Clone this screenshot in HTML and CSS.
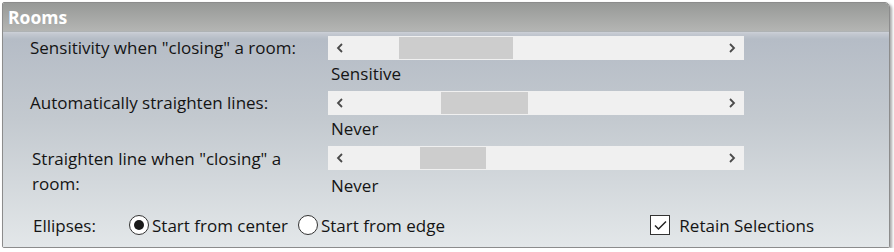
FILE: index.html
```html
<!DOCTYPE html>
<html>
<head>
<meta charset="utf-8">
<link rel="stylesheet" href="styles.css">
</head>
<body>
<div class="panel">
  <div class="header">Rooms</div>
  <div class="content">
    <div class="grid">
      <div class="label">Sensitivity when "closing" a room:</div>
      <div class="ctl">
        <div class="scroll">
          <span class="arrow"><svg width="8" height="10" viewBox="0 0 8 10"><polyline points="6,1 2,5 6,9" fill="none" stroke="#4a4a4a" stroke-width="1.8"/></svg></span>
          <div class="track"><div class="thumb" style="margin-left:47px;width:114px"></div></div>
          <span class="arrow"><svg width="8" height="10" viewBox="0 0 8 10"><polyline points="2,1 6,5 2,9" fill="none" stroke="#4a4a4a" stroke-width="1.8"/></svg></span>
        </div>
        <div class="value">Sensitive</div>
      </div>

      <div class="label">Automatically straighten lines:</div>
      <div class="ctl">
        <div class="scroll">
          <span class="arrow"><svg width="8" height="10" viewBox="0 0 8 10"><polyline points="6,1 2,5 6,9" fill="none" stroke="#4a4a4a" stroke-width="1.8"/></svg></span>
          <div class="track"><div class="thumb" style="margin-left:89px;width:87px"></div></div>
          <span class="arrow"><svg width="8" height="10" viewBox="0 0 8 10"><polyline points="2,1 6,5 2,9" fill="none" stroke="#4a4a4a" stroke-width="1.8"/></svg></span>
        </div>
        <div class="value">Never</div>
      </div>

      <div class="label wrap">Straighten line when "closing" a room:</div>
      <div class="ctl">
        <div class="scroll">
          <span class="arrow"><svg width="8" height="10" viewBox="0 0 8 10"><polyline points="6,1 2,5 6,9" fill="none" stroke="#4a4a4a" stroke-width="1.8"/></svg></span>
          <div class="track"><div class="thumb" style="margin-left:68px;width:66px"></div></div>
          <span class="arrow"><svg width="8" height="10" viewBox="0 0 8 10"><polyline points="2,1 6,5 2,9" fill="none" stroke="#4a4a4a" stroke-width="1.8"/></svg></span>
        </div>
        <div class="value value-low">Never</div>
      </div>
    </div>

    <div class="options">
      <span class="opt-label">Ellipses:</span>
      <span class="radio checked"><span class="dot"></span></span>
      <span class="opt-text">Start from center</span>
      <span class="radio"></span>
      <span class="opt-text">Start from edge</span>
      <span class="spacer"></span>
      <span class="check"><svg width="13" height="11" viewBox="0 0 13 11"><polyline points="1,5.5 4.5,9 12,1.5" fill="none" stroke="#222" stroke-width="1.5"/></svg></span>
      <span class="opt-text chk-text">Retain Selections</span>
    </div>
  </div>
</div>
</body>
</html>
```

FILE: styles.css
```css
html, body {
  margin: 0;
  padding: 0;
  background: #ffffff;
}
body {
  font-family: "Open Sans", "Noto Sans", sans-serif;
  font-size: 17px;
  color: #141414;
}
.panel {
  margin: 2px 0 0 2px;
  width: 886px;
  height: 244px;
  border: 1px solid #8c8c8c;
  border-radius: 2px 5px 2px 2px;
  box-shadow: 2px 2px 3px rgba(0,0,0,0.35);
  overflow: hidden;
  display: flex;
  flex-direction: column;
}
.header {
  height: 29px;
  box-sizing: border-box;
  padding: 3px 0 0 5px;
  background: linear-gradient(#979997, #b4b5b3);
  color: #ffffff;
  font-weight: bold;
  font-size: 17.5px;
  line-height: 22px;
  border-bottom: 1px solid #aeb2b4;
}
.content {
  flex: 1;
  background: linear-gradient(#cdd1d8 0px, #c3c8d0 2px, #b5bcc6 7px, #c3c9cf 40%, #e3e7e9 100%);
  padding: 4px 0 0 27px;
}
.grid {
  display: grid;
  grid-template-columns: 298px 416px;
  row-gap: 4px;
}
.label {
  height: 24px;
  line-height: 24px;
  white-space: nowrap;
}
.label.wrap {
  white-space: normal;
  width: 280px;
  line-height: 25px;
  height: auto;
  padding-left: 2px;
}
.ctl {
  display: flex;
  flex-direction: column;
}
.scroll {
  height: 24px;
  display: flex;
  align-items: center;
  background: #f0f0f0;
}
.arrow {
  width: 24px;
  height: 24px;
  display: flex;
  align-items: center;
  justify-content: center;
}
.track {
  flex: 1;
  height: 22px;
  display: flex;
}
.thumb {
  height: 22px;
  background: #cdcdcd;
}
.value {
  height: 27px;
  line-height: 27px;
  padding-left: 3px;
}
.value-low {
  padding-top: 2px;
}
.options {
  display: flex;
  align-items: center;
  height: 26px;
  margin-top: 13px;
  padding-left: 3px;
  white-space: nowrap;
}
.opt-label {
  width: 96px;
}
.radio {
  width: 18px;
  height: 18px;
  border: 1px solid #333333;
  border-radius: 50%;
  background: #ffffff;
  display: flex;
  align-items: center;
  justify-content: center;
  margin-right: 3px;
}
.radio .dot {
  width: 10px;
  height: 10px;
  border-radius: 50%;
  background: #1a1a1a;
}
.opt-text {
  margin-right: 10px;
}
.spacer {
  flex: 1;
}
.check {
  width: 18px;
  height: 18px;
  border: 1px solid #333333;
  background: #ffffff;
  display: flex;
  align-items: center;
  justify-content: center;
  margin-right: 9px;
}
.chk-text {
  margin-right: 75px;
}
```
